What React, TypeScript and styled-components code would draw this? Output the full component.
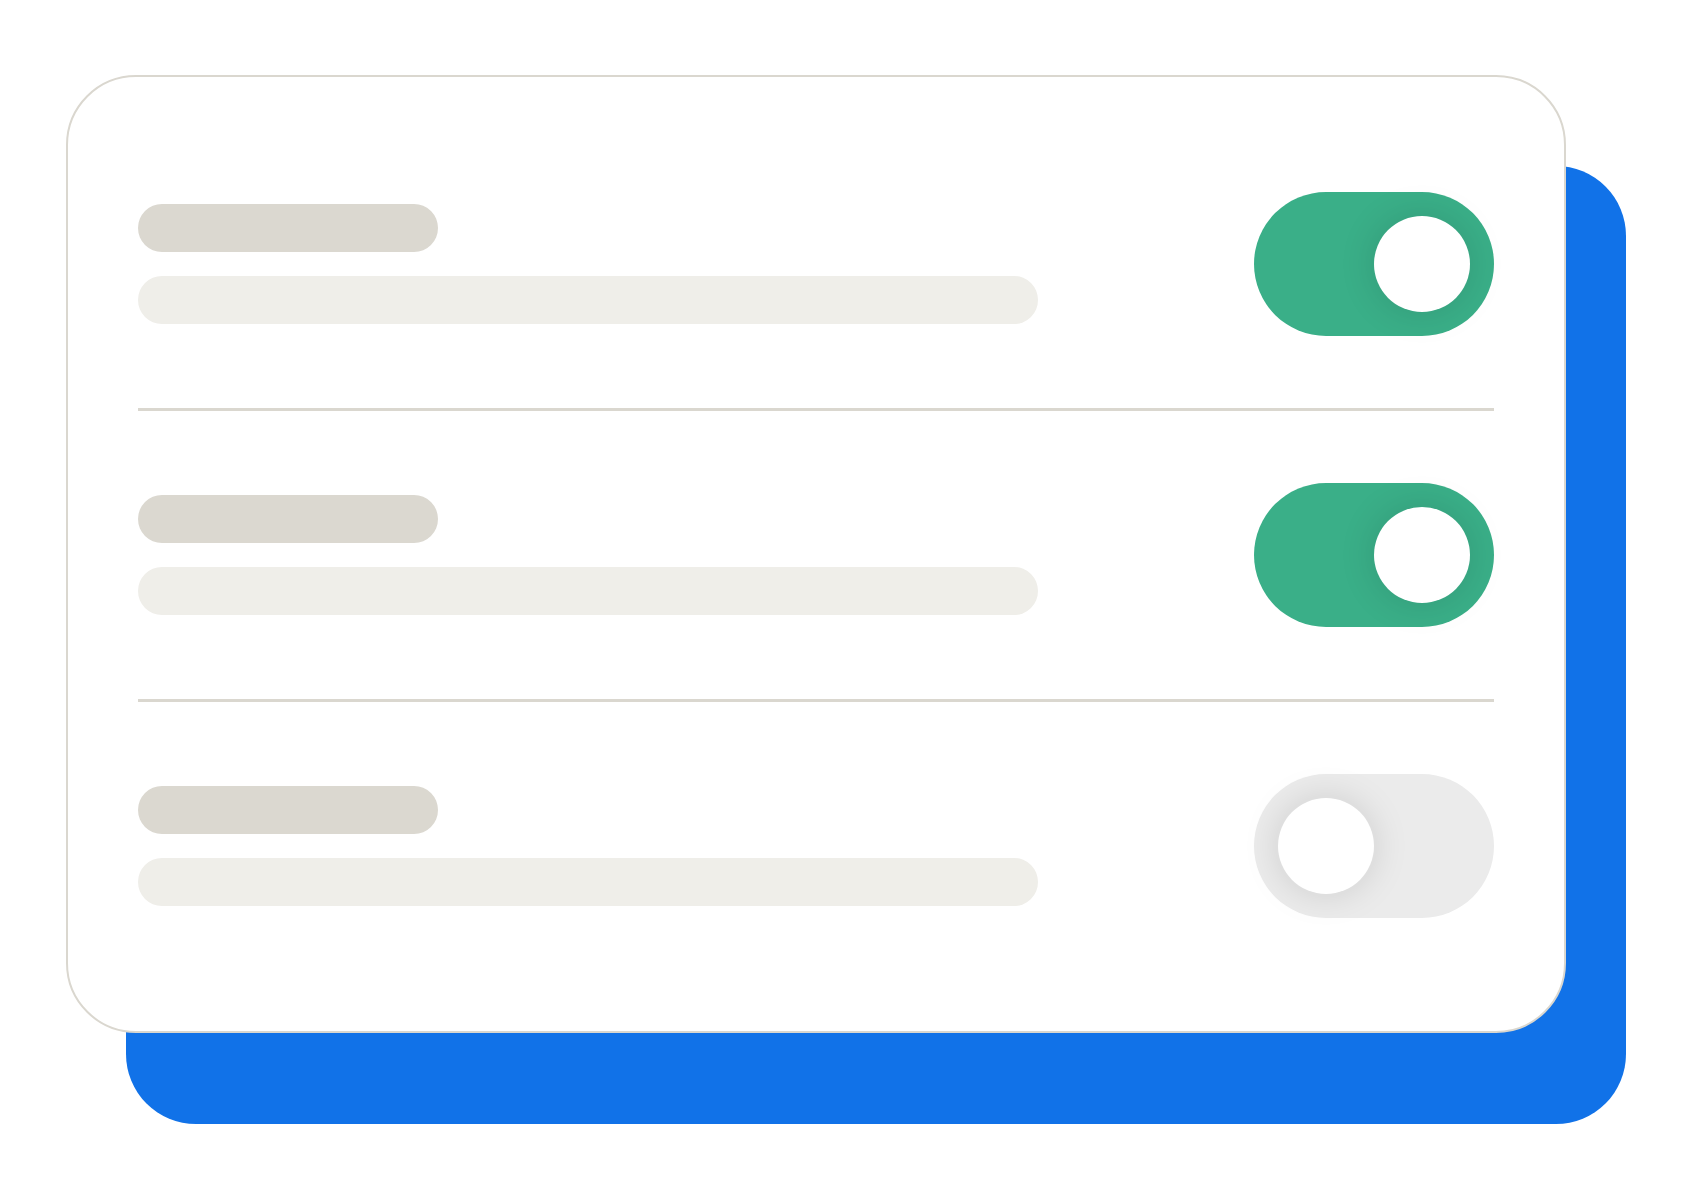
import React from "react";
import styled, { createGlobalStyle } from "styled-components";

const GlobalStyle = createGlobalStyle`
  html, body {
    margin: 0;
    padding: 0;
    background: #ffffff;
    font-family: "Inter", "Liberation Sans", sans-serif;
  }
`;

const Page = styled.main`
  width: 1692px;
  height: 1200px;
  box-sizing: border-box;
  padding: 75px 0 0 66px;
  background: #ffffff;
`;

const Stack = styled.div`
  position: relative;
  width: 1500px;
`;

const Backdrop = styled.div`
  position: absolute;
  left: 60px;
  top: 91px;
  width: 1500px;
  height: 958px;
  border-radius: 70px;
  background: #1172e8;
  z-index: 0;
`;

const Card = styled.section`
  position: relative;
  z-index: 1;
  box-sizing: border-box;
  width: 1500px;
  height: 958px;
  padding: 115px 70px 113px;
  background: #ffffff;
  border: 2px solid #dad7cf;
  border-radius: 70px;
  display: flex;
  flex-direction: column;
  gap: 72px;
`;

const Row = styled.div`
  display: flex;
  align-items: center;
  justify-content: space-between;
  height: 144px;
`;

const TextLines = styled.div`
  display: flex;
  flex-direction: column;
  gap: 24px;
`;

const Line = styled.div<{ $width: number; $tone: "title" | "body" }>`
  width: ${(p) => p.$width}px;
  height: 48px;
  border-radius: 24px;
  background: ${(p) => (p.$tone === "title" ? "#dbd8d0" : "#efeee9")};
`;

const Divider = styled.hr`
  margin: 0;
  border: none;
  height: 3px;
  background: #dad7cf;
`;

const Track = styled.div<{ $on: boolean }>`
  box-sizing: border-box;
  width: 240px;
  height: 144px;
  border-radius: 72px;
  padding: 24px;
  display: flex;
  justify-content: ${(p) => (p.$on ? "flex-end" : "flex-start")};
  background: ${(p) => (p.$on ? "#3aaf88" : "#ebebeb")};
`;

const Knob = styled.div`
  width: 96px;
  height: 96px;
  border-radius: 50%;
  background: #ffffff;
  box-shadow: 0 0 36px rgba(0, 0, 0, 0.13);
`;

const rows = [true, true, false];

export default function App() {
  return (
    <>
      <GlobalStyle />
      <Page>
        <Stack>
          <Backdrop />
          <Card>
            {rows.map((on, i) => (
              <React.Fragment key={i}>
                {i > 0 && <Divider />}
                <Row>
                  <TextLines>
                    <Line $width={300} $tone="title" />
                    <Line $width={900} $tone="body" />
                  </TextLines>
                  <Track $on={on}>
                    <Knob />
                  </Track>
                </Row>
              </React.Fragment>
            ))}
          </Card>
        </Stack>
      </Page>
    </>
  );
}
